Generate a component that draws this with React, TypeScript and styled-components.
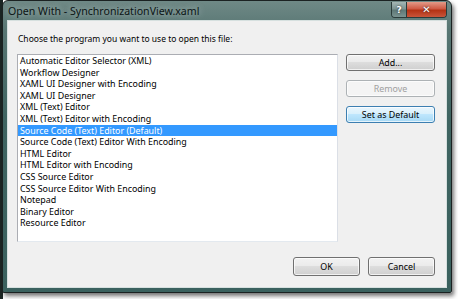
import React, { useState } from 'react';
import styled, { createGlobalStyle } from 'styled-components';

const Global = createGlobalStyle`
    html, body {
        margin: 0;
        padding: 0;
        background: #ffffff;
    }
    body {
        font-family: "Noto Sans", "Open Sans", sans-serif;
        width: 458px;
        height: 299px;
        overflow: hidden;
    }
`;

const Desktop = styled.div`
    display: flex;
    padding: 0 0 0 2px;
    height: 299px;
    background: linear-gradient(90deg, #1c2624 0, #1c2624 3px, #ffffff 3px);
`;

const Frame = styled.div`
    width: 450px;
    height: 293px;
    box-sizing: border-box;
    border: 1px solid #1b2222;
    border-radius: 6px 6px 2px 2px;
    background: linear-gradient(180deg, #6f8986 0%, #587673 10%, #3f6461 40%, #3a615e 100%);
    box-shadow: 2px 3px 4px rgba(0, 0, 0, 0.55);
    display: flex;
    flex-direction: column;
    padding: 0 4px 4px;
`;

const TitleBar = styled.div`
    height: 19px;
    display: flex;
    align-items: flex-start;
    justify-content: space-between;
`;

const Title = styled.span`
    font-size: 10.6px;
    color: #0b1414;
    padding: 3px 0 0 1px;
    text-shadow: 0 0 6px rgba(230, 240, 238, 0.7);
`;

const Caption = styled.div`
    display: flex;
    margin-top: 1px;
    border: 1px solid #2a3b3a;
    border-top: none;
    border-radius: 0 0 4px 4px;
    overflow: hidden;
`;

const CaptionButton = styled.div<{ $close?: boolean }>`
    width: ${p => (p.$close ? 39 : 14)}px;
    height: 15px;
    display: flex;
    align-items: center;
    justify-content: center;
    color: #ffffff;
    font-family: "DejaVu Sans", sans-serif;
    font-weight: bold;
    font-size: ${p => (p.$close ? 10 : 9)}px;
    text-shadow: 0 0 2px #222;
    background: ${p =>
        p.$close
            ? 'linear-gradient(180deg, #e39a88 0%, #cf5a44 45%, #b43214 55%, #c8553a 100%)'
            : 'linear-gradient(180deg, #a4b6b4 0%, #7e9593 45%, #5f7977 55%, #7a9391 100%)'};
    & + & {
        border-left: 1px solid #2a3b3a;
    }
`;

const Client = styled.div`
    flex: 1;
    background: #f0f0f0;
    border: 1px solid #d6e0df;
    display: flex;
    flex-direction: column;
    padding: 0 11px 11px 9px;
`;

const Prompt = styled.div`
    font-size: 8.5px;
    color: #000;
    height: 13px;
    margin: 12px 0 8px 1px;
`;

const Middle = styled.div`
    display: flex;
    gap: 8px;
    height: 188px;
`;

const ListBox = styled.ul`
    width: 321px;
    box-sizing: border-box;
    margin: 0;
    padding: 0;
    list-style: none;
    background: #ffffff;
    border: 1px solid #abadb3;
    border-right-color: #dbdfe6;
    border-bottom-color: #e3e9ef;
`;

const Item = styled.li<{ $selected?: boolean }>`
    height: 11.6px;
    line-height: 11.6px;
    font-size: 8.9px;
    padding-left: 2px;
    white-space: nowrap;
    color: ${p => (p.$selected ? '#ffffff' : '#000000')};
    background: ${p => (p.$selected ? '#3399ff' : 'transparent')};
`;

const Side = styled.div`
    display: flex;
    flex-direction: column;
    gap: 9px;
    width: 89px;
`;

const Button = styled.button<{ $variant?: 'default' | 'disabled' | 'focused' }>`
    height: 17px;
    width: 100%;
    box-sizing: border-box;
    padding: 0;
    font-family: "Noto Sans", "Open Sans", sans-serif;
    font-size: 8.9px;
    border-radius: 3px;
    color: ${p => (p.$variant === 'disabled' ? '#a0a0a0' : '#000000')};
    border: 1px solid ${p =>
        p.$variant === 'disabled' ? '#adb2b5' : p.$variant === 'focused' ? '#3c7fb1' : '#707070'};
    background: ${p =>
        p.$variant === 'disabled'
            ? '#f4f4f4'
            : p.$variant === 'focused'
            ? 'linear-gradient(180deg, #eaf6fd 0%, #d9f0fc 45%, #bee6fd 50%, #a7d9f5 100%)'
            : 'linear-gradient(180deg, #f2f2f2 0%, #ebebeb 45%, #dddddd 50%, #cfcfcf 100%)'};
    box-shadow: inset 0 0 0 1px rgba(255, 255, 255, 0.7);
`;

const Footer = styled.div`
    display: flex;
    justify-content: flex-end;
    gap: 8px;
    margin-top: auto;
`;

const FooterButton = styled(Button)`
    width: 67px;
    height: 19px;
`;

const programs = [
    'Automatic Editor Selector (XML)',
    'Workflow Designer',
    'XAML UI Designer with Encoding',
    'XAML UI Designer',
    'XML (Text) Editor',
    'XML (Text) Editor with Encoding',
    'Source Code (Text) Editor (Default)',
    'Source Code (Text) Editor With Encoding',
    'HTML Editor',
    'HTML Editor with Encoding',
    'CSS Source Editor',
    'CSS Source Editor With Encoding',
    'Notepad',
    'Binary Editor',
    'Resource Editor',
];

const App: React.FC = () => {
    const [selected, setSelected] = useState(6);

    return (
        <>
            <Global />
            <Desktop>
                <Frame>
                    <TitleBar>
                        <Title>Open With - SynchronizationView.xaml</Title>
                        <Caption>
                            <CaptionButton>?</CaptionButton>
                            <CaptionButton $close>✕</CaptionButton>
                        </Caption>
                    </TitleBar>
                    <Client>
                        <Prompt>Choose the program you want to use to open this file:</Prompt>
                        <Middle>
                            <ListBox>
                                {programs.map((name, i) => (
                                    <Item key={name} $selected={i === selected} onClick={() => setSelected(i)}>
                                        {name}
                                    </Item>
                                ))}
                            </ListBox>
                            <Side>
                                <Button>Add...</Button>
                                <Button $variant="disabled">Remove</Button>
                                <Button $variant="focused">Set as Default</Button>
                            </Side>
                        </Middle>
                        <Footer>
                            <FooterButton>OK</FooterButton>
                            <FooterButton>Cancel</FooterButton>
                        </Footer>
                    </Client>
                </Frame>
            </Desktop>
        </>
    );
};

export default App;
